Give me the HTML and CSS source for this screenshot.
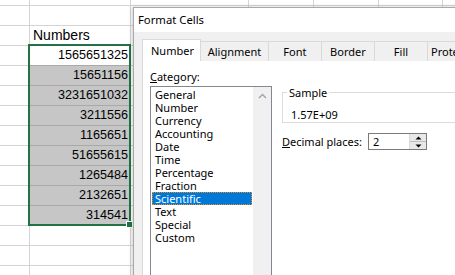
FILE: index.html
```html
<!DOCTYPE html>
<html>
<head>
<meta charset="utf-8">
<link rel="stylesheet" href="styles.css">
</head>
<body>
<div class="screen">
  <div class="sheet">
    <div class="col-b">
      <div class="cell head">Numbers</div>
      <div class="cells">
        <div class="cell num active">1565651325</div>
        <div class="cell num">15651156</div>
        <div class="cell num">3231651032</div>
        <div class="cell num">3211556</div>
        <div class="cell num">1165651</div>
        <div class="cell num">51655615</div>
        <div class="cell num">1265484</div>
        <div class="cell num">2132651</div>
        <div class="cell num">314541</div>
      </div>
    </div>
    <div class="selection"><span class="handle"></span></div>
  </div>

  <div class="dialog">
    <div class="titlebar">Format Cells</div>
    <div class="body">
      <div class="tabs">
        <div class="tab active w-number">Number</div>
        <div class="tab w-align">Alignment</div>
        <div class="tab w-small">Font</div>
        <div class="tab w-small">Border</div>
        <div class="tab w-small">Fill</div>
        <div class="tab w-protect">Protection</div>
      </div>
      <div class="page">
        <div class="left-col">
          <div class="label"><u>C</u>ategory:</div>
          <div class="listbox">
            <ul class="items">
              <li class="item">General</li>
              <li class="item">Number</li>
              <li class="item">Currency</li>
              <li class="item">Accounting</li>
              <li class="item">Date</li>
              <li class="item">Time</li>
              <li class="item">Percentage</li>
              <li class="item">Fraction</li>
              <li class="item selected">Scientific</li>
              <li class="item">Text</li>
              <li class="item">Special</li>
              <li class="item">Custom</li>
            </ul>
            <div class="scrollbar">
              <div class="scroll-btn">
                <svg width="9" height="6" viewBox="0 0 9 6"><path d="M1 5 L4.5 1.5 L8 5" fill="none" stroke="#a3a3a3" stroke-width="1.4"/></svg>
              </div>
            </div>
          </div>
        </div>
        <div class="right-col">
          <fieldset class="sample">
            <legend>Sample</legend>
            <div class="sample-value">1.57E+09</div>
          </fieldset>
          <div class="decimals">
            <span class="dec-label"><u>D</u>ecimal places:</span>
            <div class="spin">
              <span class="spin-value">2</span>
              <div class="spin-btns">
                <div class="spin-btn"><svg width="7" height="4" viewBox="0 0 7 4"><path d="M0.5 3.5 L3.5 0.5 L6.5 3.5 Z" fill="#000"/></svg></div>
                <div class="spin-btn"><svg width="7" height="4" viewBox="0 0 7 4"><path d="M0.5 0.5 L3.5 3.5 L6.5 0.5 Z" fill="#000"/></svg></div>
              </div>
            </div>
          </div>
        </div>
      </div>
    </div>
  </div>
</div>
</body>
</html>
```

FILE: styles.css
```css
* { box-sizing: border-box; }
html, body { margin: 0; padding: 0; }
body { width: 455px; height: 275px; overflow: hidden; background: #fff; }

.screen { position: relative; width: 455px; height: 275px; overflow: hidden; }

.sheet {
  position: relative;
  width: 455px;
  height: 275px;
  background-color: #fff;
  background-image:
    linear-gradient(#d4d4d4, #d4d4d4),
    linear-gradient(#d4d4d4, #d4d4d4),
    linear-gradient(#d4d4d4, #d4d4d4),
    linear-gradient(#d4d4d4, #d4d4d4),
    linear-gradient(#d4d4d4, #d4d4d4),
    linear-gradient(#d4d4d4, #d4d4d4),
    repeating-linear-gradient(to bottom, transparent 0 5px, #d4d4d4 5px 6px, transparent 6px 20px);
  background-size: 1px 100%, 1px 100%, 1px 100%, 1px 100%, 1px 100%, 1px 100%, 100% 100%;
  background-position: 29px 0, 130px 0, 248px 0, 313px 0, 378px 0, 442px 0, 0 0;
  background-repeat: no-repeat;
  font-family: "Liberation Sans", Arial, sans-serif;
  color: #000;
}

.col-b {
  margin-left: 30px;
  width: 100px;
  padding-top: 26px;
  display: flex;
  flex-direction: column;
  gap: 1px;
}
.cell { height: 19px; line-height: 19px; white-space: nowrap; }
.head { font-size: 14px; padding-left: 3px; }
.cells { display: flex; flex-direction: column; gap: 1px; background: #a9a9a9; }
.num { background: #c6c6c6; text-align: right; padding-right: 2px; font-size: 12.6px; }
.num.active { background: #fff; }

.selection {
  position: absolute;
  left: 28px; top: 44px;
  width: 103px; height: 182px;
  border: 2px solid #217346;
}
.handle {
  position: absolute;
  right: -4px; bottom: -4px;
  width: 7px; height: 7px;
  background: #217346;
  border: 1px solid #fff;
}

/* dialog */
.dialog {
  position: absolute;
  left: 133px; top: 7px;
  width: 360px; height: 300px;
  border: 1px solid #a8a8a8;
  background: #f0f0f0;
  box-shadow: -1px 0 4px rgba(0,0,0,0.2);
  font-family: "Noto Sans", "Open Sans", sans-serif;
  font-size: 11px;
  color: #000;
  display: flex;
  flex-direction: column;
}
.titlebar {
  height: 24px;
  line-height: 24px;
  background: #fff;
  padding-left: 4px;
  font-size: 11.3px;
}
.body { flex: 1; padding: 7px 0 0 8px; display: flex; flex-direction: column; }

.tabs { display: flex; align-items: flex-end; height: 22px; margin-bottom: -1px; position: relative; z-index: 1; }
.tab {
  height: 20px;
  line-height: 19px;
  text-align: center;
  border: 1px solid #d9d9d9;
  border-bottom: none;
  margin-right: -1px;
  background: #f0f0f0;
  white-space: nowrap;
}
.tab.active {
  height: 22px;
  line-height: 21px;
  background: #fff;
  position: relative;
  z-index: 2;
  text-align: left;
  padding-left: 8px;
}
.w-number { width: 60px; }
.w-align { width: 70px; }
.w-small { width: 55px; }
.w-protect { width: 66px; flex: none; text-align: left; padding-left: 3px; }

.page {
  flex: 1;
  background: #fff;
  border: 1px solid #d9d9d9;
  padding-left: 7px;
  display: flex;
  gap: 10px;
}
.left-col { display: flex; flex-direction: column; }
.label { padding-top: 9px; line-height: 13px; height: 22px; }
.listbox {
  margin-top: 3px;
  width: 122px;
  height: 200px;
  border: 1px solid #828790;
  display: flex;
}
.items { list-style: none; margin: 0; padding: 1px; width: 102px; }
.item { height: 13px; line-height: 13px; padding-left: 3px; white-space: nowrap; }
.item.selected {
  background: #0078d7;
  color: #fff;
  border: 1px dotted #f08a1c;
  line-height: 11px;
  padding-left: 2px;
}
.scrollbar { width: 18px; background: #f0f0f0; }
.scroll-btn { height: 17px; display: flex; align-items: center; justify-content: center; }

.right-col { margin-top: 25px; display: flex; flex-direction: column; }
.sample {
  margin: 0;
  width: 200px;
  border: 1px solid #dcdcdc;
  padding: 0 0 1px 4px;
  min-inline-size: 0;
}
.sample legend { padding: 0 2px; line-height: 13px; }
.sample-value { padding-top: 9px; line-height: 13px; margin-left: 4px; }

.decimals { margin-top: 10px; display: flex; align-items: center; height: 17px; }
.dec-label { width: 86px; line-height: 13px; }
.spin {
  width: 59px; height: 17px;
  border: 1px solid #7a7a7a;
  background: #fff;
  display: flex;
  justify-content: space-between;
}
.spin-value { padding-left: 4px; line-height: 15px; }
.spin-btns { width: 17px; display: flex; flex-direction: column; border-left: 1px solid #dadada; }
.spin-btn { flex: 1; display: flex; align-items: center; justify-content: center; background: #e8e8e8; }
.spin-btn + .spin-btn { border-top: 1px solid #bdbdbd; }
```
